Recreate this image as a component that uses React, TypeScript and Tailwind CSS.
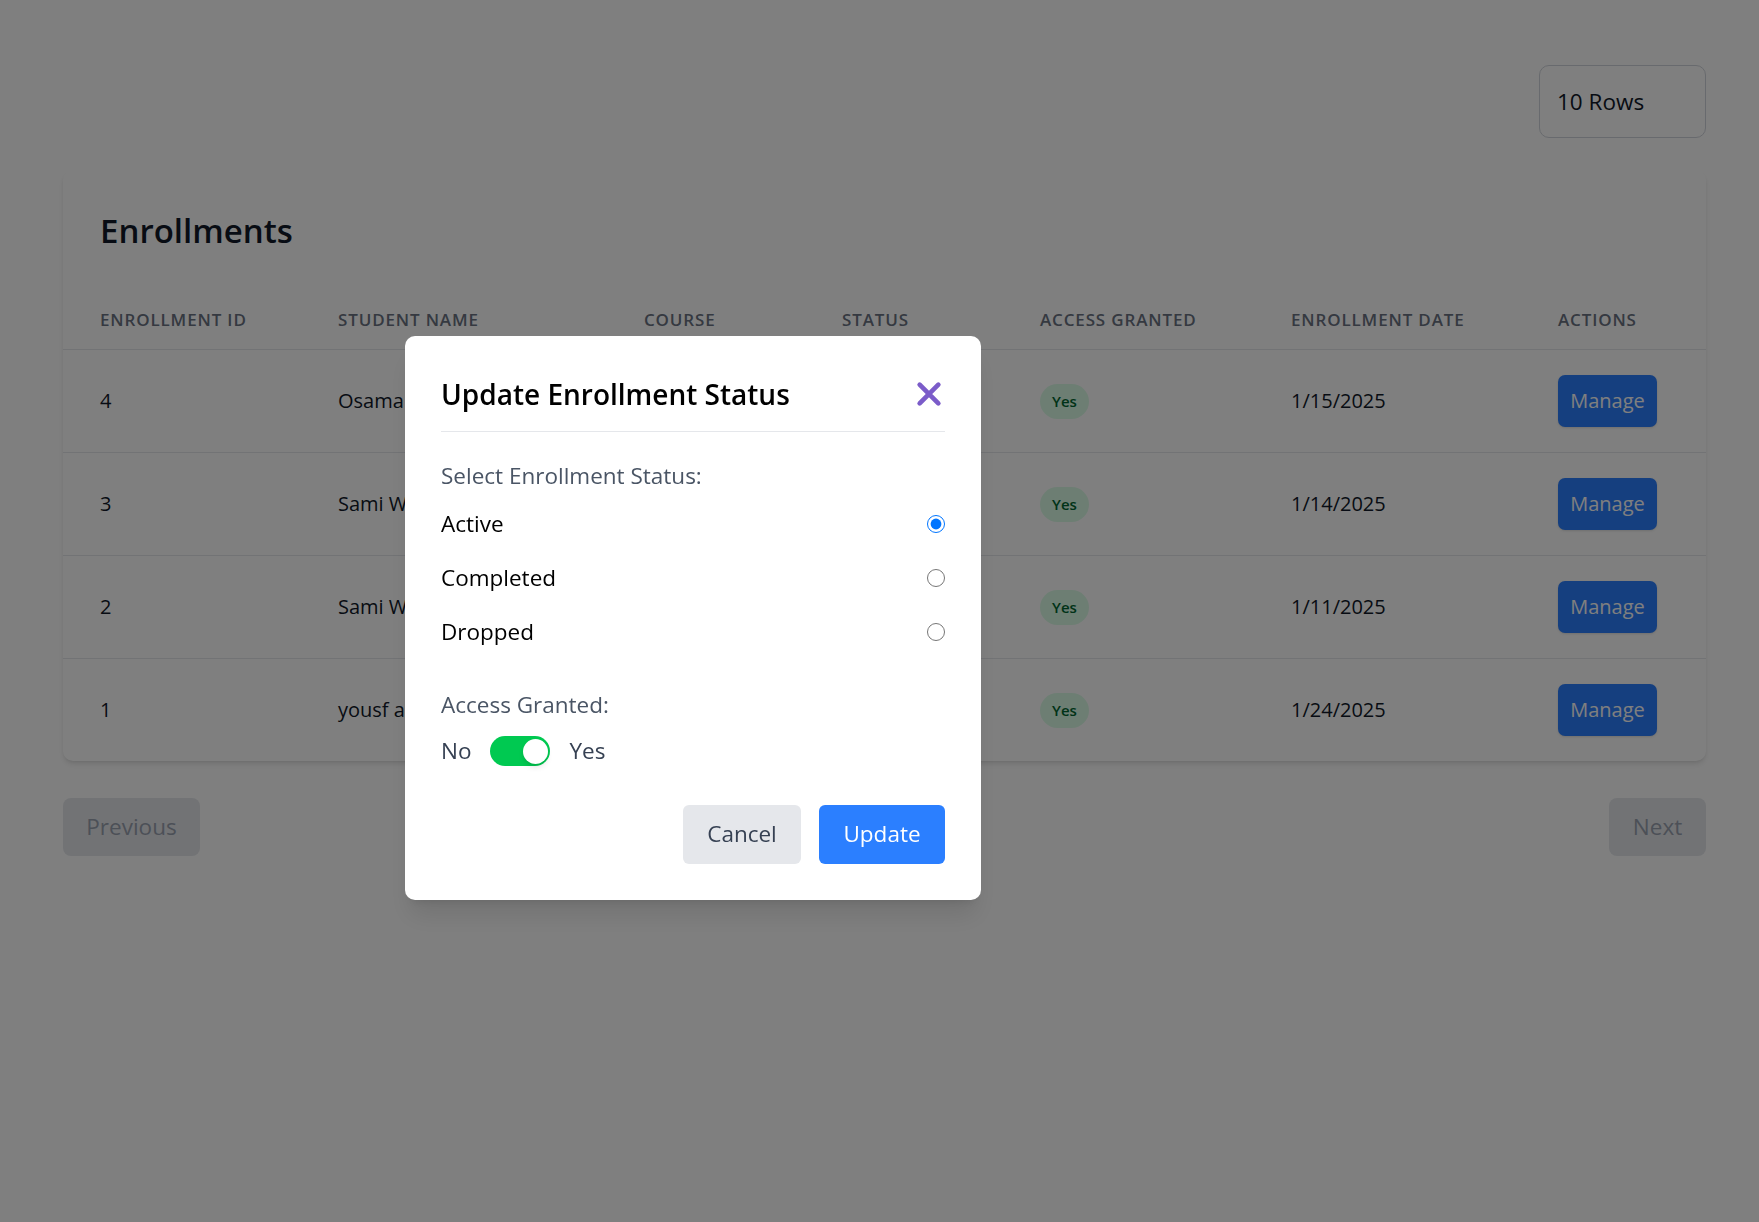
import React from 'react';

type Enrollment = {
  id: number;
  student: string;
  course: string;
  status: string;
  access: boolean;
  date: string;
};

export default function App() {
  const enrollments: Enrollment[] = [
    { id: 4, student: "Osama Khaled", course: "React Basics", status: "Active", access: true, date: "1/15/2025" },
    { id: 3, student: "Sami Waleed", course: "Node.js", status: "Active", access: true, date: "1/14/2025" },
    { id: 2, student: "Sami Waleed", course: "UI Design", status: "Active", access: true, date: "1/11/2025" },
    { id: 1, student: "yousf ahmed", course: "Python", status: "Active", access: true, date: "1/24/2025" },
  ];

  const statuses = ["Active", "Completed", "Dropped"];

  return (
    <div className="relative min-h-screen bg-white pl-[63px] pr-[53px] pt-[65px] font-['Open_Sans',sans-serif] text-gray-900">
      {/* Rows per page */}
      <div className="flex justify-end">
        <div className="flex h-[73px] w-[167px] items-center rounded-[10px] border border-gray-300 pl-[17px] text-[22.5px]">
          10 Rows
        </div>
      </div>

      {/* Table card */}
      <div className="mt-[32px] overflow-hidden rounded-[10px] bg-white shadow-md">
        <h2 className="px-[37px] py-[37.5px] text-[33px] font-semibold leading-[45px] text-gray-900">Enrollments</h2>
        <table className="w-full table-fixed border-collapse text-left">
          <thead>
            <tr className="border-b border-gray-200">
              <th className="w-[238px] py-[17px] pl-[37px] text-[17px] font-semibold uppercase leading-[25px] tracking-wider text-gray-500">Enrollment ID</th>
              <th className="w-[306px] py-[17px] pl-[37px] text-[17px] font-semibold uppercase leading-[25px] tracking-wider text-gray-500">Student Name</th>
              <th className="w-[198px] py-[17px] pl-[37px] text-[17px] font-semibold uppercase leading-[25px] tracking-wider text-gray-500">Course</th>
              <th className="w-[198px] py-[17px] pl-[37px] text-[17px] font-semibold uppercase leading-[25px] tracking-wider text-gray-500">Status</th>
              <th className="w-[251px] py-[17px] pl-[37px] text-[17px] font-semibold uppercase leading-[25px] tracking-wider text-gray-500">Access Granted</th>
              <th className="w-[267px] py-[17px] pl-[37px] text-[17px] font-semibold uppercase leading-[25px] tracking-wider text-gray-500">Enrollment Date</th>
              <th className="py-[17px] pl-[37px] text-[17px] font-semibold uppercase leading-[25px] tracking-wider text-gray-500">Actions</th>
            </tr>
          </thead>
          <tbody className="divide-y divide-gray-200 text-[20px]">
            {enrollments.map((e) => (
              <tr key={e.id} className="h-[102px]">
                <td className="py-[25px] pl-[37px]">{e.id}</td>
                <td className="truncate py-[25px] pl-[37px]">{e.student}</td>
                <td className="truncate py-[25px] pl-[37px]">{e.course}</td>
                <td className="py-[25px] pl-[37px]">{e.status}</td>
                <td className="py-[25px] pl-[37px]">
                  <span className="inline-flex h-[35px] items-center rounded-full bg-green-100 px-[12px] text-[15px] font-semibold text-green-800">
                    {e.access ? "Yes" : "No"}
                  </span>
                </td>
                <td className="py-[25px] pl-[37px]">{e.date}</td>
                <td className="py-[25px] pl-[37px]">
                  <button className="h-[52px] w-[99px] rounded-[7px] bg-blue-500 text-[20px] text-white shadow-sm">Manage</button>
                </td>
              </tr>
            ))}
          </tbody>
        </table>
      </div>

      {/* Pagination */}
      <div className="mt-[37px] flex justify-between">
        <button className="h-[58px] w-[137px] rounded-[8px] bg-gray-200 text-[22.5px] text-gray-400">Previous</button>
        <button className="h-[58px] w-[97px] rounded-[8px] bg-gray-200 text-[22.5px] text-gray-400">Next</button>
      </div>

      {/* Modal */}
      <div className="fixed inset-0 z-40 flex items-start bg-black/50 pl-[405px] pt-[336px]">
        <div className="w-[576px] rounded-[10px] bg-white p-[36px] shadow-xl">
          <div className="flex h-[44px] items-center justify-between">
            <h3 className="text-[28px] font-semibold text-black">Update Enrollment Status</h3>
            <button className="flex h-[32px] w-[32px] items-center justify-center text-[#7b5cc9]">
              <svg width="32" height="32" viewBox="0 0 24 24" fill="none" stroke="currentColor" strokeWidth="3.5" strokeLinecap="round">
                <path d="M5 5 L19 19 M19 5 L5 19" />
              </svg>
            </button>
          </div>
          <div className="h-[16px] border-b border-gray-200" />

          <p className="mt-[26px] text-[22.5px] leading-[35px] text-gray-600">Select Enrollment Status:</p>
          <div className="mt-[13px] flex flex-col gap-[19px]">
            {statuses.map((s) => (
              <label key={s} className="flex h-[35px] items-center justify-between text-[22.5px] text-black">
                <span>{s}</span>
                <input
                  type="radio"
                  name="status"
                  defaultChecked={s === "Active"}
                  className="m-0 h-[18px] w-[18px]"
                />
              </label>
            ))}
          </div>

          <p className="mt-[37.5px] text-[22.5px] leading-[35px] text-gray-600">Access Granted:</p>
          <div className="mt-[12px] flex h-[35px] items-center gap-[19px] text-[22.5px] text-gray-700">
            <span>No</span>
            <div className="relative h-[30px] w-[60px] rounded-full bg-green-500">
              <div className="absolute right-[2px] top-[3px] h-[25px] w-[25px] rounded-full bg-white shadow-md" />
            </div>
            <span>Yes</span>
          </div>

          <div className="mt-[36px] flex justify-end gap-[18px]">
            <button className="h-[59px] w-[118px] rounded-[6px] bg-gray-200 text-[22.5px] text-gray-700">Cancel</button>
            <button className="h-[59px] w-[126px] rounded-[6px] bg-blue-500 text-[22.5px] text-white">Update</button>
          </div>
        </div>
      </div>
    </div>
  );
}
